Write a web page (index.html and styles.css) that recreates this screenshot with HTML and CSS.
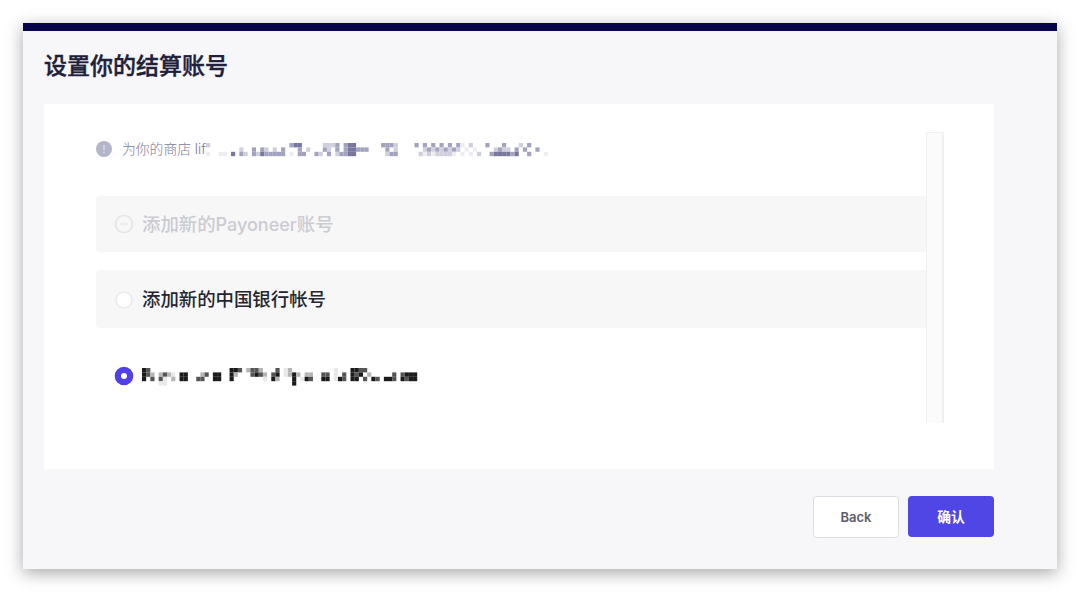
FILE: index.html
```html
<!DOCTYPE html>
<html lang="zh-CN">

<head>
	<meta charset="utf-8">
	<title>设置你的结算账号</title>
	<link rel="stylesheet" href="styles.css">
</head>

<body>
	<div class="modal">
		<h1>设置你的结算账号</h1>
		<div class="panel">
			<div class="content">
				<div class="hint">
					<svg class="info" width="16" height="16" viewBox="0 0 16 16">
						<circle cx="8" cy="8" r="8" fill="#b4b4ca" />
						<path d="M8 4v5M8 10.5v1.5" stroke="#d9d9e6" stroke-width="1.6" />
					</svg>
					<span>为你的商店 lif</span>
					<svg class="mosaic mosaic-hint" id="shop" width="346" height="18"></svg>
				</div>
				<label class="option disabled">
					<svg class="radio" width="20" height="20" viewBox="0 0 20 20">
						<circle cx="10" cy="10" r="8.5" fill="none" stroke="#e4e4e7" stroke-width="1.5" />
						<path d="M6 10h8" stroke="#e9e9ec" stroke-width="1.5" />
					</svg>
					<span>添加新的<span class="latin">Payoneer</span>账号</span>
				</label>
				<label class="option">
					<svg class="radio" width="20" height="20" viewBox="0 0 20 20">
						<circle cx="10" cy="10" r="8" fill="#fff" stroke="#ececef" stroke-width="2" />
					</svg>
					<span>添加新的中国银行帐号</span>
				</label>
				<label class="option selected">
					<svg class="radio" width="20" height="20" viewBox="0 0 20 20">
						<circle cx="10" cy="10" r="9.3" fill="#5140e8" />
						<circle cx="10" cy="10" r="3" fill="#fff" />
					</svg>
					<svg class="mosaic" id="account" width="280" height="18"></svg>
				</label>
			</div>
			<div class="scrollbar"></div>
		</div>
		<div class="actions">
			<button class="back">Back</button>
			<button class="confirm">确认</button>
		</div>
	</div>
	<script src="mosaic.js"></script>
</body>

</html>
```
FILE: mosaic.js
```js
// masked values, one digit per cell: 1 is the lightest, 4 the darkest
var cw = 4.17
var ch = 4.4

function mosaic(id, rows, colors) {
	var o = ''
	rows.forEach((row, y) => {
		row.split('').forEach((c, x) => {
			if (c == '.') return
			o += `<rect x="${x * cw}" y="${y * ch}" width="${cw}" height="${ch}" fill="${colors[c - 1]}"/>`
		})
	})
	document.getElementById(id).innerHTML = o
}

mosaic('shop', [
	'2...................344.....2223.344......3332....3.3.3.3.3.31.2...3...3...2.3',
	'........2..3.32.2.3...3.2...32.3.344333....3.2......232323232.1.1....2322.3.3..3',
	'1..11.4.32.32433333.1.33..32.3.23344.......233.....212122221.1.1.2..3444434..3...1'
], ['#eeeef2', '#cfcfdd', '#a3a3bf', '#77779b'])

mosaic('account', [
	'43...................443.2332...3.12..........1...4433',
	'432.2321.44...23.44..42...3432.34.1242.22..33.1.3.434.2.....3.3444',
	'4.3.31.2.44..33..44..4.......1.42...4.143..44.143.44.3.43.443.4344',
	'....11..............................4'
], ['#e8e8e8', '#b5b5b5', '#555', '#1b1b1b'])
```
FILE: styles.css
```css
body {
	margin: 0;
	padding: 23px;
	background: #fff;
	font-family: "Noto Sans CJK SC", sans-serif;
}

.modal {
	box-sizing: border-box;
	height: 546px;
	border-top: 8px solid #06044a;
	padding: 0 63px 0 21px;
	background: #f7f7f9;
	box-shadow: 0 4px 16px rgba(0, 0, 0, 0.35);
}

h1 {
	margin: 0;
	height: 73px;
	line-height: 67px;
	font-size: 23px;
	font-weight: 500;
	color: #20203a;
	-webkit-text-stroke: 0.4px #20203a;
}

.panel {
	display: flex;
	box-sizing: border-box;
	height: 365px;
	padding: 28px 50px 46px 52px;
	background: #fff;
}

.content {
	flex: 1;
}

.hint {
	display: flex;
	align-items: center;
	height: 34px;
	margin-bottom: 30px;
	font-family: Inter, "Noto Sans CJK SC", sans-serif;
	font-size: 13.8px;
	font-weight: 300;
	color: #7c7c9c;
}

.hint span {
	padding-bottom: 2px;
}

.info {
	margin-right: 10px;
}

.mosaic {
	flex: none;
	margin-top: 2px;
}

.mosaic-hint {
	margin-top: 5px;
}

.option {
	display: flex;
	align-items: center;
	box-sizing: border-box;
	height: 58px;
	margin-bottom: 18px;
	padding-left: 18px;
	background: #f7f7f8;
	border-radius: 4px 0 0 4px;
	font-size: 18.4px;
	font-weight: 500;
	color: #25252f;
}

.option > span {
	padding-bottom: 2px;
}

.option .radio {
	margin: 2px 8px 0 0;
}

.option.disabled {
	height: 56px;
	color: #cbcbd2;
}

.option.disabled .radio {
	margin-top: 0;
}

.latin {
	font-family: Inter, sans-serif;
	font-size: 18px;
}

.option.selected {
	background: #fff;
}

.option.selected .mosaic {
	margin-top: 4px;
}

.scrollbar {
	box-sizing: border-box;
	width: 18px;
	border: 1px solid #f0f0f0;
	border-width: 1px 2px 0 1px;
	background: #fbfbfb;
}

.actions {
	display: flex;
	justify-content: flex-end;
	gap: 9px;
	margin-top: 27px;
}

button {
	box-sizing: border-box;
	width: 86px;
	height: 42px;
	padding: 0;
	border: 1px solid #dcdce4;
	border-radius: 4px;
	background: #fff;
	font-family: Inter, "Noto Sans CJK SC", sans-serif;
	font-size: 13px;
	font-weight: 600;
	color: #5c5c6a;
}

.confirm {
	height: 41px;
	padding-bottom: 1px;
	border: 0;
	background: #5046e5;
	font-size: 13.8px;
	color: #fff;
}
```
